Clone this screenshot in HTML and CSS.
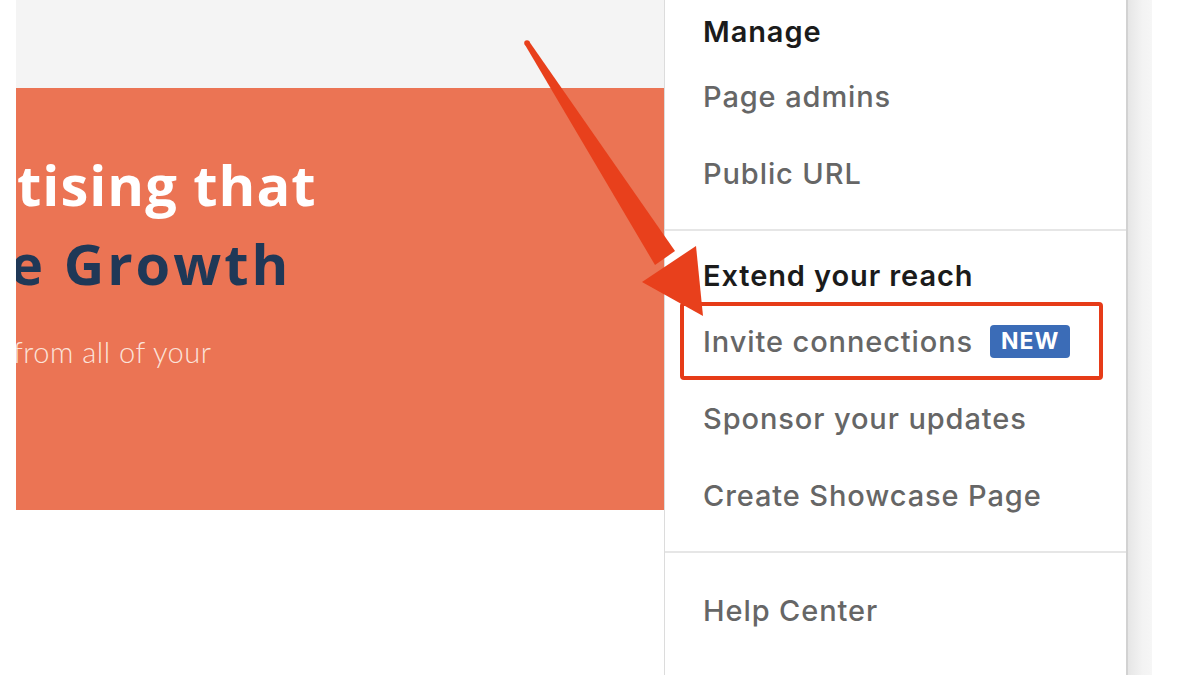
FILE: index.html
```html
<!DOCTYPE html>
<html lang="en">
<head>
  <meta charset="UTF-8" />
  <meta name="viewport" content="width=device-width, initial-scale=1.0" />
  <title>Company Page Admin Menu</title>
  <link rel="stylesheet" href="styles.css">
</head>
<body>
  <div class="page">
    <div class="gutter"></div>

    <main class="content">
      <div class="topbar"></div>
      <section class="banner">
        <h1 class="banner-title">
          <span class="line-light">tising that</span>
          <span class="line-dark">e Growth</span>
        </h1>
        <p class="banner-sub">from all of your</p>
      </section>
    </main>

    <nav class="menu">
      <div class="menu-section">
        <div class="menu-header">Manage</div>
        <a class="menu-item" href="#">Page admins</a>
        <a class="menu-item" href="#">Public URL</a>
      </div>
      <div class="menu-section">
        <div class="menu-header">Extend your reach</div>
        <a class="menu-item highlighted" href="#">Invite connections <span class="badge">NEW</span></a>
        <a class="menu-item" href="#">Sponsor your updates</a>
        <a class="menu-item" href="#">Create Showcase Page</a>
      </div>
      <div class="menu-section">
        <a class="menu-item" href="#">Help Center</a>
      </div>
    </nav>

    <div class="scroll-track"></div>
  </div>

  <!-- annotation arrow drawn over the screenshot -->
  <svg class="arrow" width="1200" height="675" viewBox="0 0 1200 675">
    <circle cx="527" cy="43" r="2.8" fill="#e8401c" />
    <polygon points="524.8,44.6 529.2,41.4 675,251 655,265" fill="#e8401c" />
    <polygon points="642,282 696,246 703,316" fill="#e8401c" />
  </svg>
</body>
</html>
```

FILE: styles.css
```css
* {
  box-sizing: border-box;
}

body {
  margin: 0;
  background: #fff;
  font-family: Inter, 'Liberation Sans', sans-serif;
  overflow: hidden;
}

.page {
  display: flex;
  height: 675px;
}

.gutter {
  width: 16px;
  flex: none;
}

.content {
  width: 648px;
  flex: none;
}

.topbar {
  height: 88px;
  background: #f4f4f4;
}

.banner {
  height: 422px;
  background: #eb7454;
  overflow: hidden;
  padding-top: 57px;
}

.banner-title {
  margin: 0;
  font-family: 'Open Sans', sans-serif;
  font-weight: 700;
  font-size: 56px;
  line-height: 79px;
}

.banner-title span {
  display: block;
}

.line-light {
  color: #fff;
  letter-spacing: 1px;
  margin-left: 1px;
}

.line-dark {
  color: #1f3857;
  letter-spacing: 3px;
  margin-left: -6px;
}

.banner-sub {
  margin: 31px 0 0 -3px;
  font-family: Lato, sans-serif;
  font-weight: 300;
  font-size: 29px;
  line-height: 36px;
  letter-spacing: 0.5px;
  color: #fbe3da;
}

.menu {
  width: 464px;
  flex: none;
  margin-top: -13px;
  height: 700px;
  background: #fff;
  border-left: 1px solid #dcdcdc;
  border-right: 2px solid #d2d2d2;
}

.menu-section {
  padding: 19px 0 17px;
  border-bottom: 2px solid #e6e6e6;
}

.menu-section:last-child {
  border-bottom: none;
}

.menu-header {
  height: 52px;
  line-height: 52px;
  padding-left: 38px;
  font-size: 29px;
  font-weight: 600;
  letter-spacing: 0.9px;
  color: #1b1b1b;
}

.menu-item {
  display: flex;
  align-items: center;
  height: 77px;
  padding-left: 38px;
  font-size: 29px;
  font-weight: 500;
  letter-spacing: 0.9px;
  color: #666;
  text-decoration: none;
}

.menu-item.highlighted {
  margin: 0 23px 0 15px;
  padding-left: 19px;
  height: 78px;
  border: 4px solid #e63b18;
  border-radius: 4px;
}

.badge {
  margin-left: 17px;
  padding: 0 11px;
  height: 33px;
  line-height: 33px;
  background: #3b6cb7;
  border-radius: 4px;
  color: #fff;
  font-size: 23px;
  font-weight: 700;
  letter-spacing: 1px;
}

.scroll-track {
  width: 24px;
  flex: none;
  background: linear-gradient(to right, #e6e6e6, #f3f3f3 60%, #f6f6f6);
}

.arrow {
  position: absolute;
  top: 0;
  left: 0;
  pointer-events: none;
}
```
